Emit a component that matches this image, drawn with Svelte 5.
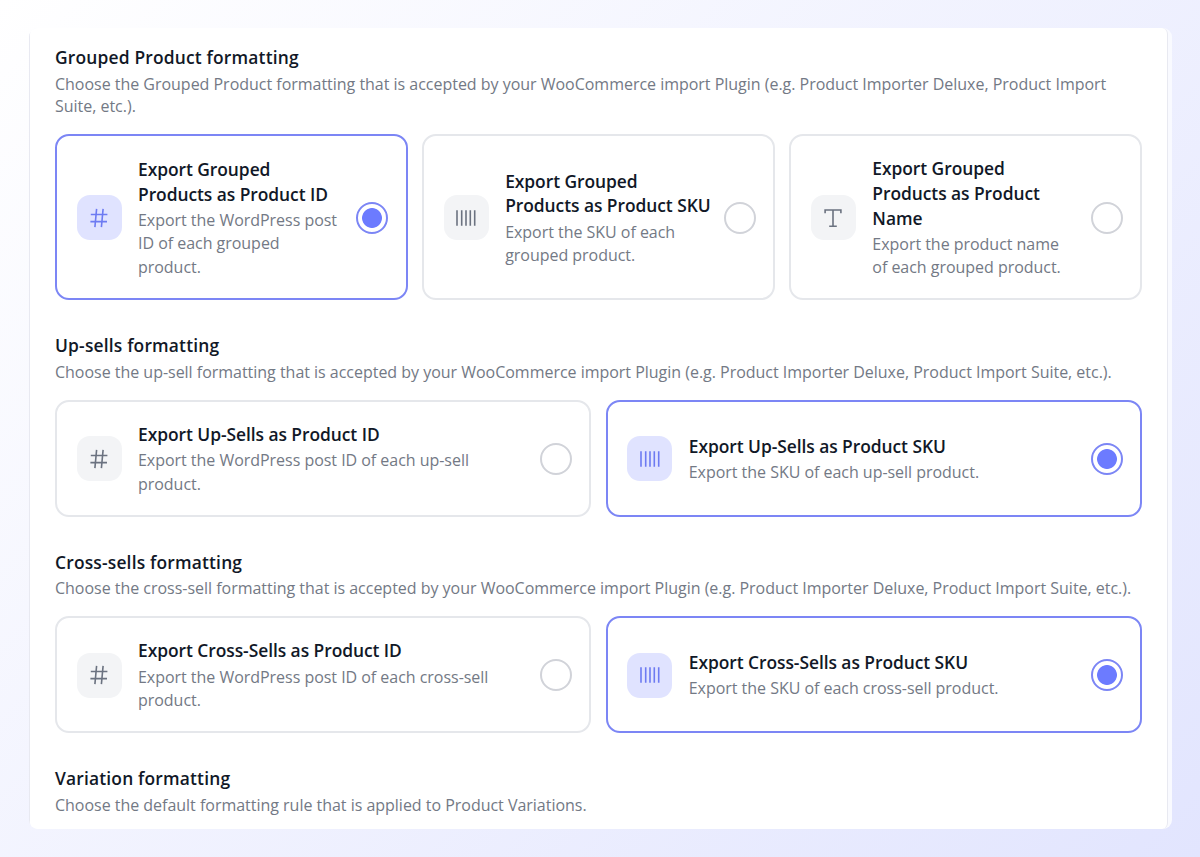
<script>
  const choose = (name) =>
    `Choose the ${name} formatting that is accepted by your WooCommerce import Plugin (e.g. Product Importer Deluxe, Product Import`;

  let sections = $state([
    {
      title: 'Grouped Product formatting',
      text: [choose('Grouped Product'), 'Suite, etc.).'],
      selected: 0,
      options: [
        {
          icon: 'hash',
          title: ['Export Grouped', 'Products as Product ID'],
          text: ['Export the WordPress post', 'ID of each grouped', 'product.']
        },
        {
          icon: 'barcode',
          title: ['Export Grouped', 'Products as Product SKU'],
          text: ['Export the SKU of each', 'grouped product.']
        },
        {
          icon: 'type',
          title: ['Export Grouped', 'Products as Product', 'Name'],
          text: ['Export the product name', 'of each grouped product.']
        }
      ]
    },
    {
      title: 'Up-sells formatting',
      text: [choose('up-sell') + ' Suite, etc.).'],
      selected: 1,
      options: [
        {
          icon: 'hash',
          title: ['Export Up-Sells as Product ID'],
          text: ['Export the WordPress post ID of each up-sell', 'product.']
        },
        {
          icon: 'barcode',
          title: ['Export Up-Sells as Product SKU'],
          text: ['Export the SKU of each up-sell product.']
        }
      ]
    },
    {
      title: 'Cross-sells formatting',
      text: [choose('cross-sell') + ' Suite, etc.).'],
      selected: 1,
      options: [
        {
          icon: 'hash',
          title: ['Export Cross-Sells as Product ID'],
          text: ['Export the WordPress post ID of each cross-sell', 'product.']
        },
        {
          icon: 'barcode',
          title: ['Export Cross-Sells as Product SKU'],
          text: ['Export the SKU of each cross-sell product.']
        }
      ]
    },
    {
      title: 'Variation formatting',
      text: ['Choose the default formatting rule that is applied to Product Variations.'],
      selected: 0,
      options: []
    }
  ]);
</script>

<div class="page">
  <main class="panel">
    <div class="content">
      {#each sections as section}
        <section>
          <h2>{section.title}</h2>
          <p class="intro">
            {#each section.text as line}<span>{line}</span>{/each}
          </p>
          {#if section.options.length}
            <div class="options" class:three={section.options.length === 3}>
              {#each section.options as option, i}
                <button
                  class="option"
                  class:active={section.selected === i}
                  onclick={() => (section.selected = i)}
                >
                  <span class="icon">
                    <svg width="24" height="24" viewBox="0 0 24 24" fill="none" stroke="currentColor" stroke-width="1.6">
                      {#if option.icon === 'hash'}
                        <path d="M9.6 2.9 7.9 21.1M16.1 2.9 14.4 21.1M3.8 8.5H20.4M3.4 15.6H20" />
                      {:else if option.icon === 'barcode'}
                        <path d="M3 4.2V19.8M7.7 4.2V19.8M12 4.2V19.8M16.3 4.2V19.8M20.7 4.2V19.8" />
                      {:else}
                        <path d="M4.1 7.2V4H19.9V7.2M12 4V20.3M8.2 20.3H15.8" />
                      {/if}
                    </svg>
                  </span>
                  <span class="body">
                    <span class="title">
                      {#each option.title as line}<span>{line}</span>{/each}
                    </span>
                    <span class="text">
                      {#each option.text as line}<span>{line}</span>{/each}
                    </span>
                  </span>
                  <span class="radio"></span>
                </button>
              {/each}
            </div>
          {/if}
        </section>
      {/each}
    </div>
  </main>
</div>

<style>
  :global(body) {
    margin: 0;
  }

  .page {
    box-sizing: border-box;
    height: 857px;
    padding: 28px 28px 28px 29px;
    background: linear-gradient(135deg, #ffffff 0%, #e2e5fe 100%);
    font-family: 'Segoe UI', 'Open Sans', 'Noto Sans', sans-serif;
    overflow: hidden;
  }

  .panel {
    box-sizing: border-box;
    height: 801px;
    padding-right: 4px;
    border-radius: 9px;
    background: #f9faff;
    overflow: hidden;
  }

  .content {
    box-sizing: border-box;
    height: 801px;
    padding: 16.9px 25px 0;
    border: solid #e8e9f1;
    border-width: 0 1px;
    border-radius: 6px;
    background: #fff;
  }

  section {
    margin-bottom: 33px;
  }

  h2,
  p {
    margin: 0;
  }

  h2,
  .title {
    color: #111827;
    font-size: 17.4px;
    font-weight: 600;
    line-height: 24.75px;
    letter-spacing: -0.05px;
  }

  h2 {
    letter-spacing: 0.18px;
  }

  p span,
  .title span,
  .text span {
    display: block;
    white-space: nowrap;
  }

  .intro {
    margin-top: 2.9px;
    color: #737985;
    font-size: 16px;
    line-height: 22.5px;
    letter-spacing: -0.02px;
  }

  .options {
    display: grid;
    grid-template-columns: repeat(2, 1fr);
    gap: 14.5px;
    margin-top: 16.2px;
  }

  .options.three {
    grid-template-columns: repeat(3, 1fr);
  }

  .option {
    box-sizing: border-box;
    display: flex;
    align-items: center;
    min-width: 0;
    height: 117px;
    padding: 1px 17.3px 0 19.5px;
    border: 2px solid #e5e7eb;
    border-radius: 14px;
    background: #fff;
    font-family: inherit;
    text-align: left;
  }

  .three .option {
    height: 166.7px;
  }

  .option.active {
    border-color: #7c86f5;
  }

  .icon {
    flex: none;
    display: flex;
    align-items: center;
    justify-content: center;
    width: 45px;
    height: 45px;
    margin-right: 16.5px;
    border-radius: 13px;
    background: #f3f4f6;
    color: #6b7280;
  }

  .active .icon {
    background: #e0e3ff;
    color: #6d7bf2;
  }

  .body {
    flex: 1;
    min-width: 0;
    padding-top: 1px;
  }

  .title,
  .text {
    display: block;
  }

  .text {
    margin-top: 2.6px;
    color: #737985;
    font-size: 16px;
    line-height: 23.5px;
    letter-spacing: -0.03px;
  }

  .radio {
    flex: none;
    box-sizing: border-box;
    width: 32px;
    height: 32px;
    border: 2px solid #d1d3d9;
    border-radius: 50%;
  }

  .active .radio {
    border-color: #7c86f5;
    background: radial-gradient(circle, #6c7bff 9.5px, #fff 10.3px);
  }
</style>
